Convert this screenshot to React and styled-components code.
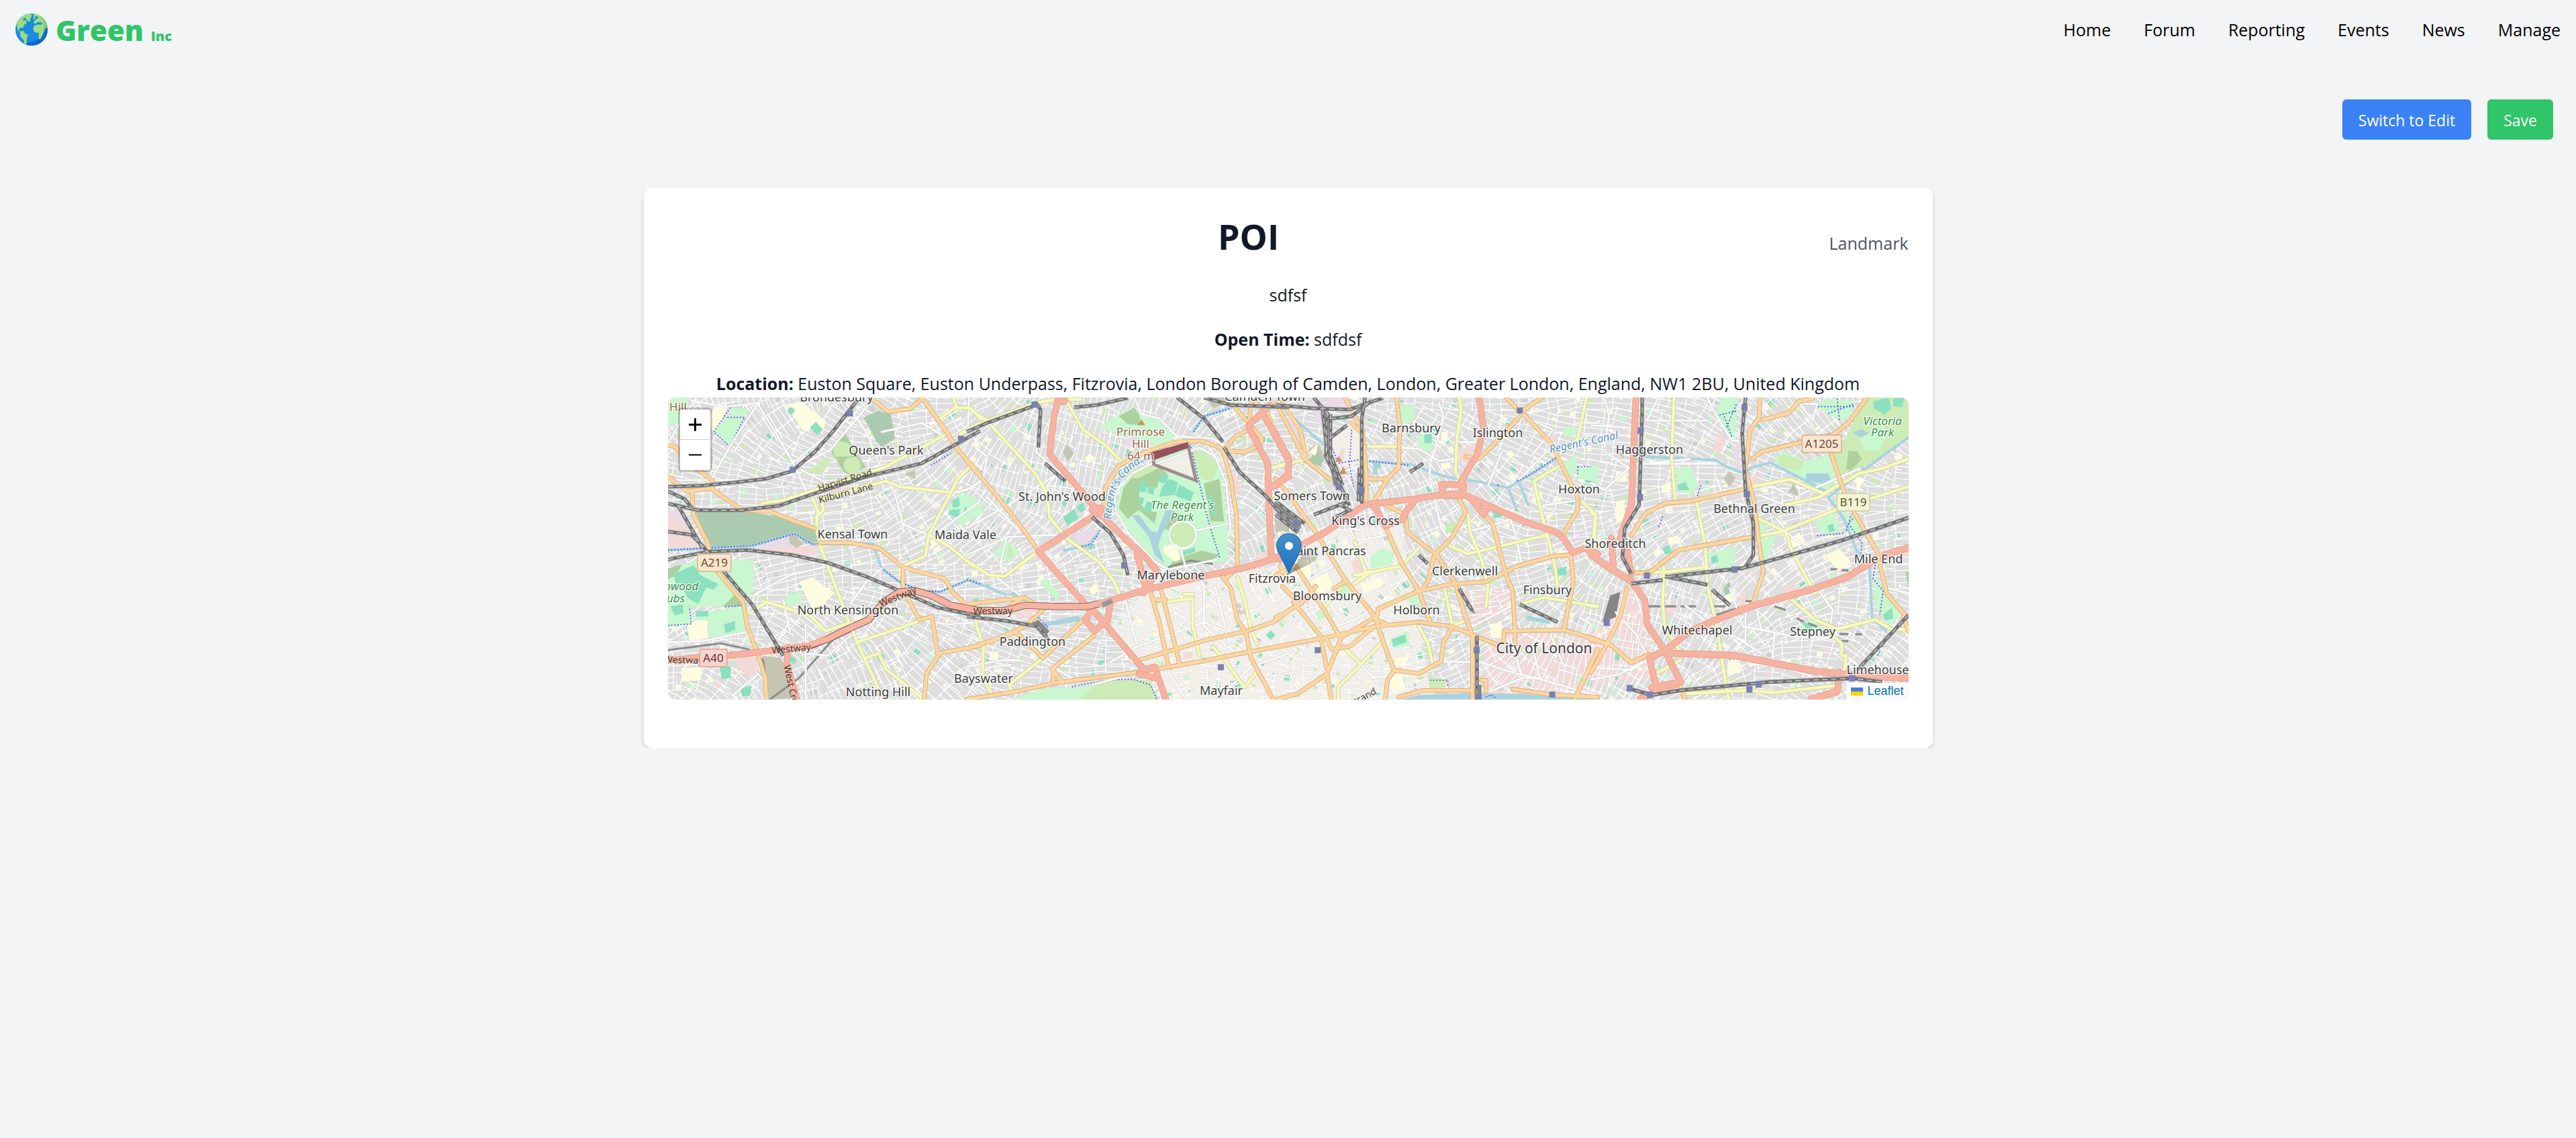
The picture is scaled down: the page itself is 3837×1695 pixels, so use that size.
import React from "react";
import styled, { createGlobalStyle } from "styled-components";

const GlobalStyle = createGlobalStyle`
  * {
    box-sizing: border-box;
  }

  body {
    margin: 0;
    background-color: #f3f4f6;
    color: #111827;
    font-family: "Segoe UI", "Open Sans", "Noto Sans", sans-serif;
    font-size: 25px;
    line-height: 42px;
  }
`;

const COLORS = {
  park: "#c8f7d0",
  grass: "#cdebb5",
  wood: "#add19e",
  pitch: "#8ce0c0",
  cemetery: "#aacbaf",
  water: "#aad3df",
  pink: "#f4d9d9",
  lilac: "#ebdbe8",
  school: "#fffde0",
  brown: "#c5c5b4",
  cream: "#f2eee8",
  yard: "#858585",
};

// every tile keeps its own drawing units: scale maps them to the map canvas
const TILES = [
  {
    transform: "translate(-15 -12) scale(0.3333)",
    base: [],
    areas: [
      ["park", "M45 36H140L120 140L45 165Z M250 190L310 115L385 130L320 255Z M320 85L400 85L390 125L330 120Z"],
      ["school", "M235 110L265 60L310 80L270 170L240 190Z M570 70L640 55L750 140L735 200L690 170L650 185Z M130 1040L220 1030L225 1110L140 1125Z M105 1245L195 1240L190 1300L105 1305Z M630 860L690 840L790 910L700 1000Z"],
      ["cemetery", "M165 545L380 545L520 565L700 625L715 680L660 690L610 645L540 670L420 700L240 708L190 600Z M920 125L985 95L1040 110L1060 220L1000 258L975 230Z"],
      ["wood", "M775 280L835 195L930 350L850 380L830 370Z"],
      ["grass", "M780 260Q800 220 850 240L880 270L860 300L790 300Z M830 340a38 38 0 1 0 76 0a38 38 0 1 0-76 0 M650 380L760 300L770 320L740 370Z"],
      ["park", "M45 810L180 760L430 765L425 900L385 940L280 970L150 970L150 1050L45 1055Z M165 1000L390 970L390 1090L230 1110L225 1030L165 1030Z M1290 530L1370 465L1440 500V560L1350 610Z M570 920L640 905L640 960L570 965Z"],
      ["wood", "M45 800L110 780L80 830L45 850Z M290 970L340 920L385 940L370 970Z"],
      ["pitch", "M70 825L160 785L190 830L270 870L250 895L215 885L180 960L130 930L110 880L80 870Z M55 970L110 960L115 1000L75 1010Z M170 990h55v25h-55Z M295 1050L345 1035L345 1075L300 1090Z M680 170L705 145L738 180L712 205Z M580 95a15 15 0 1 0 30 0a15 15 0 1 0-30 0 M1310 500L1345 480L1350 520L1320 530Z M1300 540L1350 535L1345 575L1300 560Z M1368 540a20 20 0 1 0 40 0a20 20 0 1 0-40 0 M275 1240L325 1235L325 1290L285 1295Z M370 1335L420 1325L410 1370L375 1372Z"],
      ["pink", "M45 540L90 550L200 700L45 712Z M620 700L720 700L700 745L560 735L440 712Z M340 1210L430 1190L450 1250L400 1290Z"],
      ["lilac", "M45 540L110 545L140 620L45 560Z M420 700L540 665L590 650L600 690L480 720Z"],
      ["brown", "M585 655L610 645L650 690L620 708L590 690Z M465 1190L550 1200L620 1380L500 1386Z M1100 380L1150 360L1150 400Z"],
    ],
    white: [
      "M45 240L130 100L170 40 M150 50L300 78L450 60 M460 38L450 70L530 200L605 330L670 470 M840 60L930 190L1010 380L1060 470L1095 600V640",
      "M600 330L720 235L890 100 M625 345L770 270L940 70 M80 405H460L640 370 M240 400L330 240L450 60 M1090 600L1210 650",
      "M435 915L590 830L760 790 M860 960L930 860L1000 800 M660 1180L760 1190L860 1100L900 1090 M45 1130L200 1125L390 1085",
      "M330 1370L450 1270 M1390 40L1385 180 M1010 470L1060 540 M640 360L760 420 M660 1050V1380 M1220 660L1440 500 M1310 460Q1380 460 1440 410 M1000 190L1180 150L1280 210",
      "M435 915L400 1000 M560 940L590 1080 M1170 1030L1300 1050L1440 1040 M940 850L860 960",
    ],
    yellow: [
      "M460 530L465 510L560 495L700 450L940 370L1010 350L1280 205",
      "M680 460L715 545L708 610L725 700L790 870L850 1030L890 1130L990 1345L1000 1386",
      "M708 570L740 540L730 490L940 430L1020 410L1080 435L1310 460L1340 400L1400 340",
      "M1310 460L1210 650L1195 745L1095 790 M1210 650L1300 700L1410 790 M410 1000L485 950L680 1010L750 1080L850 1045",
      "M890 1130L1100 1060L1180 1030 M930 1200L985 1180L1020 1250L1180 1380 M1260 130L1330 80L1400 85L1440 130 M1320 36L1335 80 M1350 200L1440 150",
    ],
    orange: [
      "M45 250L75 255L170 350L245 410V450L380 540L500 545L600 585L700 620 M45 390L130 455L240 440",
      "M152 460L158 560L220 680L230 730L270 820L380 950L400 1060L445 1180L480 1290L485 1386",
      "M725 685L860 685L990 710L1095 795L1280 845L1320 910L1380 965L1440 985",
      "M1095 795V890L1130 960L1170 1030L1225 1015L1250 1180L1440 1145 M1260 1180L1200 1270L1190 1386",
      "M960 45L1030 100L1130 85L1175 45 M1180 36L1290 190L1340 270L1400 335L1440 385",
    ],
    red: [
      "M45 1210L310 1190L530 1165L680 1145L760 1115L850 1070L940 1030L1010 950L1080 905L1150 900L1220 920L1310 965L1440 990",
      "M585 1150L575 1225L600 1310L620 1386",
    ],
    rail: [
      "M45 435L200 430L350 415L480 400L600 365L700 280L780 190L890 50",
      "M45 510L180 540L370 540L540 520L700 465L930 390L1180 330L1440 185",
      "M45 760L220 725L400 718L600 740L760 775L940 840L1080 900L1250 975L1440 1015",
      "M45 635L150 650L200 700L300 820L420 960L560 1190 M45 455L120 490L160 540 M90 520L200 710",
    ],
    track: ["M45 1165L280 1135L400 1160L470 1210L490 1380 M870 1075L780 1120L630 1290L500 1386"],
    water: ["M45 718L240 710L420 700L540 665L610 640L690 692L960 690L1000 800L1080 860L1170 900L1260 905L1390 850L1440 870"],
    dots: ["M45 718L420 698L610 645L690 692L760 685 M1000 800L1080 860L1160 895L1260 905L1390 850L1440 870 M250 190L325 80 M385 130L320 255L250 190 M310 125H385 M45 1055L150 1048L140 970 M300 972L380 965 M1220 340L1300 290"],
    stations: [[845, 94], [589, 346], [1341, 207]],
  },
  {
    transform: "translate(445 -12) scale(0.3333)",
    base: [["cream", "M820 880L1440 780V1386H880L800 1240L640 1060Z"]],
    areas: [
      ["park", "M590 165L740 75L790 125L860 130L930 200L920 230L860 250L650 190Z"],
      ["wood", "M680 120L750 80L775 125L770 160L720 155Z"],
      ["park", "M690 420L830 320L1000 260L1060 270L1130 330L1165 600L1165 770L980 790L900 800L820 740L700 600L670 540Z"],
      ["wood", "M700 440L760 370L860 345L900 380L860 400L850 440L770 430L770 500L800 540L850 550L840 600L770 540L740 560L720 580L680 530Z M880 560L920 540L990 580L920 640L880 620Z M1060 420L1130 400L1150 590L1090 590Z M1050 720L1130 740L1070 780L900 795L930 760Z"],
      ["grass", "M700 380L740 360L820 330L860 350L760 400Z M1000 270L1060 275L1125 330L1100 410L1050 400Z M905 650a60 60 0 1 0 120 0a60 60 0 1 0-120 0"],
      ["cream", "M850 330L990 275L1010 390L900 350Z"],
      ["pitch", "M775 410L808 415L800 460L765 455Z M860 380L900 385L895 420L860 415Z M905 400L945 415L930 470L860 480L870 440Z M950 425L1015 460L1000 500L930 475Z M808 435L840 440L835 470L808 465Z M770 480L795 485L785 515L768 505Z M805 500L840 510L820 552L790 540Z M1080 475L1105 485L1110 530L1085 530Z M1095 540L1120 540L1115 562L1098 562Z M430 570L480 535L500 575L450 610Z M488 525L520 505L530 540L505 550Z M960 725L1020 705L1020 725L965 745Z"],
      ["school", "M880 700L940 690L955 760L930 770L880 730Z M310 860L335 820L350 850L320 880Z M545 890L580 860L590 900L560 920Z M100 1180L140 1170L140 1210L105 1205Z M525 310L550 285L575 310L545 325Z"],
      ["water", "M735 560L770 560L820 630L850 640L890 540L930 540L870 650L855 700L885 780L840 740L815 660Z M180 920L215 900L235 925Z M330 1045L500 1010L510 1035L350 1060Z"],
      ["park", "M115 740L170 670L240 730L190 770Z M0 470L40 480L80 550L0 570Z M325 860L350 840L420 920L400 940Z M200 1386L330 1340L500 1330L820 1310L850 1386Z"],
      ["grass", "M500 1386L600 1300L820 1300L850 1386Z M190 680L210 740L180 760Z"],
      ["lilac", "M480 660L560 615L590 650L540 690L500 690Z M705 225L755 210L770 240L720 265Z"],
      ["pink", "M205 1005L280 985L300 1010L250 1025Z M1290 745L1340 720L1360 750L1290 770Z M965 1180L1005 1170L1010 1200L970 1205Z M1180 390L1200 370L1230 460L1200 470Z"],
      ["brown", "M430 280L450 245L480 285L450 320Z M1070 36L1150 36L1160 60L1100 85Z M1375 580L1440 600V640L1380 625Z"],
      ["yard", "M290 1045L320 1030L370 1080L345 1110Z M1365 500L1440 560V620L1370 530Z"],
    ],
    white: [
      "M0 450L75 400L90 300L40 260 M0 620L180 520L370 400L420 370 M0 740L180 660L400 650 M90 480L240 640 M180 660L150 780L160 830",
      "M750 40L780 110L860 130L940 210L1100 220L1150 250 M330 110L310 280L410 370L360 430V500 M560 820L620 760L750 740",
      "M830 330L740 375L660 460L665 540L720 640L840 770L900 805L1120 760 M830 340L1040 260L1110 300L1160 420L1180 640 M905 650a60 60 0 1 0 120 0a60 60 0 1 0-120 0 M955 710L980 800 M1025 630L1165 600",
      "M0 1240L160 1210L240 1210 M330 1180L350 1220L470 1290 M170 1000L310 1150L380 1220 M700 910L760 1140 M0 1300L110 1240L200 1230",
      "M640 1220L760 1150L1060 1040L1150 1080 M1060 880V1060L1190 1170 M900 1260L980 1386 M1110 880L1180 1160 M1120 1386L1270 1240L1440 1180 M120 830L250 930L170 1000 M710 1280L560 1320",
    ],
    yellow: [
      "M0 80L90 140L310 380L360 470L370 570L440 660L590 770L660 860L680 910 M0 190L90 140L310 60",
      "M450 60L520 180L620 250L700 330 M0 765L100 830L170 835L310 730 M40 1010L45 1060L75 1150L70 1280L110 1360",
      "M890 950L1010 935V1060L1040 1190 M970 915H1010 M1210 840L1240 940L1270 1070L1300 1140 M1100 1150L1160 1220L1240 1330 M200 1350L190 1320L340 1200 M310 60L400 45L510 45",
      "M1365 350L1430 330 M1240 1330L1300 1260",
    ],
    orange: [
      "M0 320L130 470L240 610L320 720 M610 530L620 440L680 340L800 280L930 235L1050 230L1130 260L1150 290",
      "M1150 290L1180 400L1205 560L1210 800L1150 850 M1140 830L1180 890L1210 1030L1250 1090L1270 1200L1370 1386",
      "M1150 270L1200 210L1260 180L1270 60 M1190 70L1320 220L1310 250L1240 280L1160 275 M0 1160L220 1085L340 1200 M100 1130L260 1060L340 985L260 930L200 960",
      "M340 1200L520 1030 M570 1100L380 1250L430 1310 M390 1250L385 1310 M770 1210L1070 1120L1250 1080L1370 1040L1440 990",
      "M0 1385L220 1350L400 1310L760 1265L1050 1215L1250 1175L1440 1140 M820 900L860 1040L900 1230 M870 900L910 1060L950 1220 M830 940H890 M1400 790L1440 860 M1290 60L1340 100L1440 320 M0 960L260 930",
    ],
    red: [
      "M410 36L390 120L370 290L490 430L600 560L720 680L790 740L850 810L790 910 M440 50L410 60 M600 545L320 725L530 960",
      "M560 540L600 530 M0 988H170L260 965L400 970L540 970L620 950L800 895L1060 835L1250 795L1430 740 M760 730L800 890 M640 960L630 1030L570 1080L530 1030L560 980L790 1250L840 1240L890 1386 M770 1270L840 1290",
      "M1355 70L1260 160L1270 190L1345 330L1350 500L1360 740L1400 760 M1320 100L1440 320 M1440 390L1350 440",
    ],
    rail: [
      "M0 190L90 150L310 70 M310 60L330 90L320 260 M480 80L580 70L720 38 M940 36L1060 130L1145 235 M1150 260L1220 370L1340 480L1440 600 M350 330L440 410",
      "M560 570L640 640L700 740L720 830 M0 1015L180 1035L320 1060L360 1110 M1060 36L1180 70L1440 80",
    ],
    track: ["M900 795L1000 765L1100 780"],
    water: ["M1010 190L1060 120L1180 80L1250 70 M640 570L650 440L720 350L830 300 M0 850L60 870L180 920 M590 640L540 700L430 720"],
    dots: ["M1015 190L1060 120L1180 85 M830 290L1000 250L1080 590L1130 750 M500 705L560 690L595 630 M0 850L60 870 M310 1010L370 1070 M470 1330L620 1300L740 1295L820 1320L850 1386"],
    stations: [[289, 54], [690, 773], [1122, 1228]],
  },
  {
    transform: "translate(905 -12) scale(0.3333)",
    base: [
      ["cream", "M0 820L120 640L560 600L700 1386H0Z"],
      ["pink", "M930 1070L1440 1110V1386H940Z M850 900L1060 880L1040 1000L880 1050Z"],
    ],
    areas: [
      ["lilac", "M40 140L100 150L120 240L80 220Z M160 36L210 36L220 200L160 90Z M230 36H330V80L240 90Z"],
      ["brown", "M145 270L190 240L220 300L200 350Z M0 580L60 620L0 640Z"],
      ["cream", "M240 220L340 150L390 210L380 330L300 350L260 300Z"],
      ["park", "M550 80L620 70L620 140L550 160Z M635 200L700 200L700 280L640 260Z M1280 330L1340 290L1350 350L1310 390Z M1340 350L1440 340V410L1350 400Z M280 890L320 870L335 900L300 930Z M510 1120L590 1080L600 1140L530 1160Z M420 750L470 710L530 730L520 780L430 800Z M590 935L640 920L650 960L610 970Z M180 1000L200 985L220 1020L190 1030Z M1290 170L1340 165V210H1290Z"],
      ["pitch", "M665 200H698V240H665Z M970 545L1005 540L1010 570L975 575Z M1240 810L1300 790V830L1240 830Z M520 1115L580 1095L585 1130L525 1150Z"],
      ["grass", "M680 1280L770 1300L750 1340L690 1340Z M760 600L810 590L800 640L760 640Z M640 1150L720 1170L700 1200Z"],
      ["school", "M85 770L150 760L160 840L110 850Z M160 850L230 820L260 880L200 920Z M380 870L470 840L490 870L400 910Z M960 1050L1010 1040L1020 1110L960 1110Z M740 190h30v40h-30Z M1030 290L1050 270L1070 290L1050 310Z M150 280L190 240L180 300Z M535 1200L600 1190L570 1240L530 1230Z M510 1290L560 1260L580 1340L520 1350Z M740 330h40v25h-40Z M1160 460h30v30h-30Z"],
      ["pink", "M820 270L890 240L870 320L820 330Z M340 770L370 750L390 810L350 815Z M640 760L700 740L690 780Z M290 270L310 260L300 330L280 320Z M840 900L860 890L870 960Z M1210 210L1250 200L1240 235Z"],
      ["cemetery", "M150 310L190 285L215 310L200 340L170 335Z"],
      ["water", "M560 1386L640 1365L860 1358L1100 1360L1440 1386Z M435 320L455 320V380H435Z M1120 1010L1220 1030L1230 1050L1120 1030Z"],
      ["yard", "M370 350H395V500H365Z M240 330L300 440L260 430Z M0 510L120 590L100 640L20 560Z M890 1320H920V1386H890Z"],
    ],
    white: [
      "M730 60L750 120L710 280L690 330V400L740 620L800 700 M560 260L640 265L730 320L800 310 M790 236H910 M300 370L390 335",
      "M0 210L120 330 M270 470L330 560 M130 860L240 800L400 670L500 650 M0 950L100 880 M210 1080L350 1030L440 980",
      "M840 640L960 610L1050 580L1070 640L1100 780 M1190 520L1350 495 M880 1060L1050 970 M1140 300L1240 180L1150 140 M1340 150H1440",
      "M750 1215L920 1220L1040 1260L1200 1300L1440 1370 M1050 1110L1100 1280 M1230 1100L1290 1240 M1150 1150L1180 1290 M960 1350L1100 1290L1190 1290 M280 1170L130 1340 M60 1260L120 1386 M350 1200L440 1290L500 1280",
      "M380 630L330 620L420 800 M1010 280L950 430 M1090 400L1230 260 M0 1160L220 1110 M0 1040L120 970 M1360 1020L1410 1050L1390 1090L1290 1080",
    ],
    yellow: [
      "M820 36L830 90L810 220L805 370L830 420 M415 255H550 M0 350L60 330L130 315 M1390 36L1350 220L1270 290 M1270 340L1155 410L1190 560L1215 650L1250 800L1260 880",
      "M355 680L410 830L350 830L560 790L640 710 M780 700L860 735L1215 650 M860 560L870 640L920 760L950 880L940 970 M320 850L220 970 M280 1386V1330L380 1230L470 1135 M310 1160L380 1225",
      "M1090 960L1200 930L1440 970 M755 890L790 1055L860 1030 M640 1060L680 1130L700 1220 M1370 500L1430 560L1420 660 M350 870L420 820",
    ],
    orange: [
      "M0 60L60 170L130 310L240 400 M30 60L110 180L135 300 M540 36L555 160L550 350L500 400L440 500 M310 36L390 190L405 380L405 510",
      "M415 400H500 M0 400L60 470L180 640L310 850L440 1010L500 1180L530 1255L640 1270L740 1215L750 1130L790 1060",
      "M820 490L850 550L790 660L710 740L680 860L650 900 M490 610L560 770L640 900L690 1040 M480 510L580 560L590 640L720 740L800 860L850 1020L880 1100L880 1386",
      "M310 860L260 890 M0 1020L110 960L180 880 M90 790L220 990L290 1110 M0 1150L220 1110L440 1060L640 1040L790 1060L990 1140 M450 1020L460 980L640 900L790 870L940 860L1080 790L1240 745L1310 740",
      "M850 300L910 310L1000 220L1100 110L1030 36 M1190 36L1100 100L1230 240L1350 480L1350 540L1290 640 M930 560L970 600L1030 830L1060 900L1070 1080L1070 1140 M1020 1130V1080L1290 1075L1440 1120",
      "M1320 740L1330 860L1290 1070 M1440 1160L1340 1380 M490 1386L500 1300L530 1255 M0 1386L100 1360L230 1270L290 1120 M230 1270L250 1386 M230 1120L250 1160L330 1150L440 1060 M550 1375L660 1345L870 1345 M1060 1340L1240 1365L1440 1375 M920 1300H940V1350 M80 950L200 1100L230 1250 M290 1110L440 1020 M450 1030L500 1050",
      "M340 150L390 200 M0 830L80 790 M30 880L110 960",
    ],
    red: [
      "M910 36L930 180L900 290L830 410V440 M740 425H840V475H750L740 425 M0 755L220 640L400 515L620 490L750 470L830 465L920 505L1110 590L1260 640L1290 670L1330 730L1380 710L1440 735",
      "M440 520L490 610L570 580L580 550L620 500 M870 480L930 560L950 520 M0 200L60 310L55 380L0 430",
    ],
    rail: [
      "M0 70L180 85L330 90L480 38 M170 36L250 130L340 120L430 50 M230 100L225 300L280 410L330 520 M245 110V290L300 430 M210 90L235 320 M400 36L385 130V510",
      "M375 350L370 500 M0 500L130 600 M0 530L110 620 M0 560L100 640 M280 510L330 540L270 570 M640 740L680 780 M820 890L880 990 M1090 960L1260 1040 M900 1100V1386",
      "M240 220L320 160 M600 370L660 330 M170 560L330 500",
    ],
    track: ["M850 960L890 1000"],
    water: ["M60 110L220 250 M415 320L600 335L760 390L920 415L1040 440L1270 300 M1040 440L1080 545 M1090 420L1130 520"],
    dots: ["M245 240L280 330L370 315L600 340 M340 180L330 340L350 440 M990 428H1000 M1080 410L1140 380L1260 300 M1350 345H1410 M1350 345V385 M940 1375L965 1365L985 1380 M690 1300H770V1330"],
    stations: [[1078, 81], [268, 423], [371, 437], [79, 586], [175, 1152], [885, 1151], [1223, 1350], [893, 1362]],
  },
  {
    transform: "translate(1375 -12) scale(0.3333 0.3571)",
    base: [["pink", "M0 1020L180 830L250 1000L300 1200L0 1240Z"]],
    areas: [
      ["park", "M585 34H660L640 200L610 190L560 100Z M1000 70L1060 38L1180 50L1160 110L1110 130Z M380 330L440 320L480 400L450 440L385 420Z M820 290L860 260L960 300L1060 270L1100 380L1030 430L830 320Z"],
      ["grass", "M1230 34H1419V190L1300 280L1120 370L1080 270L1150 180Z M830 290L860 270L950 300L930 340L850 320Z"],
      ["park", "M1200 210L1300 150L1330 180L1280 260L1220 250Z M1000 560L1080 510L1120 590L1040 610Z M530 690L640 650L640 740L560 740Z M770 630L830 600L790 710L760 700Z M1260 780L1310 830L1390 930L1330 990L1270 900Z M920 990L980 960L1060 1010L960 1020Z M1110 510L1190 540L1210 620L1150 590Z M760 520L790 600L770 650L750 600Z"],
      ["pitch", "M1260 50L1330 34L1340 80L1310 105L1265 80Z M1350 38L1400 34L1390 75L1350 70Z M385 400L420 385L440 420L390 420Z M320 660L350 650L360 680L330 690Z M1055 570L1080 560L1090 590L1065 595Z M1305 940L1345 910L1350 955L1315 965Z M535 700L560 690L570 720L540 725Z M940 970L1000 980L970 1010Z"],
      ["water", "M960 350L1060 350L1075 390L1040 395L960 380Z M1170 180L1210 165L1240 185L1200 200Z"],
      ["wood", "M1150 255L1190 260L1210 290L1160 340L1140 330Z"],
      ["cemetery", "M590 830L620 800L630 850L600 860Z M1405 760H1419V830Z"],
      ["brown", "M590 370L620 340L645 370L620 405Z M880 430L905 390L930 445Z M125 270L145 260L145 290Z"],
      ["school", "M110 345L160 340L160 385L110 385Z M110 470L150 460L150 540L110 560Z M315 400L355 385V430L320 435Z M340 620L390 610L400 640L350 650Z M880 630L930 600L960 640L900 660Z M1050 690L1110 665L1160 720L1100 760Z M600 860L640 840L650 880L610 890Z M610 1140L660 1120L670 1180L610 1190Z M1180 360L1220 380L1190 430Z M850 1150L890 1120L900 1170Z"],
      ["pink", "M580 170L600 220L570 270L540 250Z M710 365L745 360L745 400L715 400Z M330 900L380 900L370 940L330 930Z M170 900L220 895L200 935L170 930Z M860 820L910 810L910 850L870 855Z M665 850L690 840L690 900L660 900Z"],
      ["lilac", "M640 250L665 200L665 340H645Z"],
      ["yard", "M85 860L130 845L110 950L50 970Z"],
    ],
    white: [
      "M520 34L560 110L630 215L660 215 M930 60L990 130L1010 60L950 60 M0 150L190 160 M60 260L190 340 M0 390L60 420L190 310H560 M800 400L900 450 M260 130H520",
      "M60 40L80 110L60 240 M250 130L300 34 M830 540L900 620L960 650 M560 370L600 470L680 480 M750 440L860 480 M250 310L440 290",
      "M620 830L680 990L750 1000L900 1030L1100 1040 M690 920V1060 M740 920L760 1000 M420 900L560 1000L690 1050 M1010 830L1080 920L1070 980 M810 1130L820 1020",
      "M0 1160L180 1170L280 1110 M0 1210L120 1190L250 1130 M110 930L200 1020L250 1110 M190 830L250 1000 M1330 830L1419 850 M640 1030L760 1100 M1200 1000L1340 1120 M930 440L1200 330",
    ],
    yellow: [
      "M370 34L360 280L375 460 M720 405L890 375L1040 435L1200 350L1300 330L1419 290 M870 480L1020 450L1100 400 M750 540L860 590L1100 500L1419 405 M755 610L870 590L890 660L1000 850",
      "M470 460L510 650L520 820L560 980L600 1220L615 1293 M190 765L350 760L520 740 M325 740L320 900L330 990L400 1100 M900 880L1000 960L1100 1000L1270 960L1340 1000H1419",
      "M1060 1010L1120 1060V1110L1140 1110L1130 1180 M410 1270L700 1255L810 1265L1100 1235 M0 510L20 530L15 660 M300 1180L400 1130 M0 905L30 905",
    ],
    orange: [
      "M755 34L750 120L710 170L690 340L730 470L750 640L770 760L720 900 M770 125L880 100L930 50L990 38 M720 290L760 260L940 220L1080 190L1150 140L1230 38",
      "M1070 260L1120 400L1160 490L1280 680L1320 850L1410 950 M180 610L240 520L330 475L450 465L690 415 M190 765H260L390 670L510 650L720 615",
      "M160 830L130 950L60 1080L0 1180 M0 1045L80 1060L180 1140L260 1105 M400 1240L420 1293 M1395 950L1419 1010",
    ],
    red: [
      "M200 34L180 480L130 620L160 670L180 770 M90 620L100 750 M0 690L90 750L180 800L240 880L250 980L330 1090L400 1220L270 1245",
      "M330 1090L440 1010L560 960L730 900L1000 830L1150 780L1270 710 M1310 690L1419 660 M350 1100L640 1110L860 1150L1000 1175L1200 1195L1419 1205 M330 1090L260 1120L290 1240 M1110 1180L1100 1260L980 1293 M220 1290L380 1230",
    ],
    rail: [
      "M228 34V90L225 180L215 480L150 580L140 700L180 770 M690 34L675 180L690 420L725 560V690L690 740 M180 810L320 795 M330 780L520 815 M350 780L680 745L930 680L1120 630L1419 535",
      "M540 835L620 900 M160 1245L270 1275L400 1255L800 1220L1170 1205L1300 1220 M1419 940L1190 1170",
    ],
    track: ["M560 940L660 910 M1110 1020H1150 M1180 1022H1210 M1120 1050H1150 M1070 750H1100 M1120 755H1150 M250 905H310 M330 905H380 M400 905H470 M530 905H600 M690 883H730 M820 905L870 920 M920 955L950 970 M970 975L1010 990"],
    water: ["M230 280L560 295L600 320L680 350L720 325L800 305L1060 430 M1419 200L1270 300L1060 450L1130 540L1190 680L1245 740L1255 950L1320 1010"],
    dots: ["M1000 72H1180 M1100 38L1110 130 M1060 100L1180 60 M560 110L650 90 M590 100L630 200 M600 170L650 60 M1190 520L1150 560L1210 640L1205 690 M1270 730L1260 790L1305 840L1290 940 M1160 530L1140 590 M1010 610L1130 600 M1280 1110L1310 1060 M320 530L300 580 M490 400L470 460"],
    stations: [[672, 62], [208, 159], [205, 436], [682, 423], [236, 763], [627, 738], [56, 960], [159, 1233], [249, 1260], [694, 1238], [735, 1217], [1153, 1191]],
  },
];

const PLACES = [
  ["Brondesbury", 251, 6],
  ["Queen's Park", 325, 85],
  ["Kensal Town", 275, 210],
  ["North Kensington", 268, 323],
  ["Notting Hill", 313, 445],
  ["Maida Vale", 443, 211],
  ["Bayswater", 470, 425],
  ["St. John's Wood", 587, 154],
  ["Marylebone", 749, 271],
  ["Fitzrovia", 900, 276],
  ["Paddington", 543, 370],
  ["Mayfair", 824, 443],
  ["Camden Town", 889, 5],
  ["Somers Town", 959, 153],
  ["Barnsbury", 1107, 52],
  ["Islington", 1236, 59],
  ["Hoxton", 1357, 143],
  ["King's Cross", 1039, 190],
  ["Saint Pancras", 983, 235],
  ["Clerkenwell", 1187, 265],
  ["Finsbury", 1310, 293],
  ["Bloomsbury", 982, 302],
  ["Holborn", 1115, 323],
  ["City of London", 1305, 381, "city"],
  ["Shoreditch", 1411, 224],
  ["Haggerston", 1462, 84],
  ["Bethnal Green", 1618, 172],
  ["Mile End", 1803, 247],
  ["Whitechapel", 1533, 353],
  ["Stepney", 1705, 355],
  ["Limehouse", 1802, 412],
  ["Primrose", 704, 57, "peak"],
  ["Hill", 704, 75, "peak"],
  ["64 m", 704, 93, "peak"],
  ["Hill", 15, 20, "peak"],
  ["The Regent's", 766, 166, "park"],
  ["Park", 766, 184, "park"],
  ["Victoria", 1809, 41, "park"],
  ["Park", 1809, 58, "park"],
  ["Wormwood", 2, 287, "park"],
  ["Scrubs", 0, 305, "park"],
  ["Harvist Road", 265, 128, "street", -17],
  ["Kilburn Lane", 266, 147, "street", -15],
  ["Westway", 23, 396, "street", 2],
  ["Westway", 184, 379, "street", -5],
  ["Westway", 344, 301, "street", -22],
  ["Westway", 484, 323, "street"],
  ["West Cross", 180, 435, "street", 78],
  ["Strand", 1037, 451, "street", -28],
  ["Regent's Canal", 1365, 72, "canal", -12],
];

const LABELS = {
  town: { size: 18, fill: "#3c3c3c" },
  city: { size: 21, fill: "#3c3c3c" },
  peak: { size: 17, fill: "#9c6644" },
  park: { size: 17, fill: "#3f8f52", italic: true },
  street: { size: 14, fill: "#4a3f33" },
  canal: { size: 16, fill: "#5b97c4", italic: true },
};

const SHIELDS = [
  ["A219", 44, 233, 50, "#f8e5d0", "#d9b48c", "#6b4a20"],
  ["A40", 47, 375, 41, "#f6d5d0", "#e0a090", "#6b2f2a"],
  ["A1205", 1689, 56, 59, "#f8e5d0", "#d9a98c", "#6b4a30"],
  ["B119", 1741, 143, 49, "#f4f4d6", "#cccf9c", "#55552c"],
];

const ROADS = [
  ["white", "#c8c8c8", 11, "#ffffff", 8],
  ["yellow", "#cfcf96", 18, "#f7fabf", 13],
  ["orange", "#d6aa6c", 20, "#fcd6a4", 15],
  ["red", "#e4947f", 29, "#f7b3a2", 25],
];

// side streets and small plots, the same on every render
const buildStreets = () => {
  let seed = 11;
  const rand = () => {
    seed = (seed * 16807) % 2147483647;
    return seed / 2147483647;
  };
  const fills = ["#cdebb5", "#c8f7d0", "#fffde0", "#fffde0", "#f4d9d9", "#cdebb5", "#8ce0c0", "#d0d0d0"];
  let lanes = "";
  const plots = [];
  for (let x = 0; x < 1860; x += 42) {
    for (let y = 0; y < 460; y += 38) {
      const angle = Math.sin(x / 130) * 0.6 + Math.cos(y / 90 + x / 260) * 0.8 + (rand() - 0.5) * 0.3;
      const cos = Math.cos(angle);
      const sin = Math.sin(angle);
      const line = (u1, v1, u2, v2) => {
        const p = (u, v) => `${Math.round(x + u * cos - v * sin)} ${Math.round(y + u * sin + v * cos)}`;
        lanes += `M${p(u1, v1)}L${p(u2, v2)}`;
      };
      for (let i = -2; i <= 2; i += 1) {
        line(-20 - rand() * 8, i * 9, 12 + rand() * 14, i * 9 + rand() * 4 - 2);
      }
      line(-20, -20, -20, 20);
      line(4 + rand() * 8, -20, 6, 20);
      for (let i = 0; i < 3; i += 1) {
        plots.push({
          x: Math.round(x + rand() * 40 - 20),
          y: Math.round(y + rand() * 36 - 18),
          w: 3 + Math.round(rand() * 8),
          h: 3 + Math.round(rand() * 7),
          a: Math.round((angle * 180) / Math.PI),
          fill: fills[Math.floor(rand() * fills.length)],
        });
      }
    }
  }
  return { lanes, plots };
};

const STREETS = buildStreets();

const GlobeIcon = () => (
  <svg width="48" height="48" viewBox="0 0 144 144" aria-hidden="true">
    <clipPath id="globe">
      <circle cx="72" cy="72" r="72" />
    </clipPath>
    <g clipPath="url(#globe)">
      <rect width="144" height="144" fill="#1a8cdd" />
      <path d="M50 130C95 130 125 105 134 66L144 66V144H40Z" fill="#1068cd" />
      <path d="M0 0H70L73 12L66 22L67 33L58 37L50 29L44 19L35 24L33 31L46 31L51 39L45 48L36 51L38 61L28 64L17 66L16 73L22 80L10 76L6 50L0 40Z" fill="#9bdc83" />
      <path d="M20 81L36 77L42 89L56 94L51 109L49 138L40 137L37 120L22 103Z" fill="#9bdc83" />
      <path d="M76 0H144V66H133L128 80L116 107L109 117L103 111L105 88L84 83L79 68L84 55L96 50H118V40H96L91 46L81 44L86 30L101 21L98 12L89 14L86 27L79 23L82 9Z" fill="#9bdc83" />
      <path d="M103 0H144V66H133L128 80L114 110L109 115L122 90L127 62Q129 25 103 0Z" fill="#7bc882" />
    </g>
  </svg>
);

const MarkerPin = () => (
  <svg width="76" height="62" viewBox="0 0 76 62" aria-label="Marker">
    <defs>
      <linearGradient id="pin" x1="0" y1="0" x2="0" y2="1">
        <stop offset="0" stopColor="#4592cb" />
        <stop offset="1" stopColor="#1f6fc0" />
      </linearGradient>
      <linearGradient id="shade" x1="0" y1="1" x2="1" y2="0">
        <stop offset="0" stopColor="#000" stopOpacity="0.45" />
        <stop offset="1" stopColor="#000" stopOpacity="0" />
      </linearGradient>
    </defs>
    <path d="M19 61L39 32Q52 20 62 28Q66 38 50 46Z" fill="url(#shade)" />
    <path
      d="M19 1C8 1 1 9 1 19C1 24 3 28 5 32L19 60L33 32C35 28 37 24 37 19C37 9 30 1 19 1Z"
      fill="url(#pin)"
      stroke="#2e74ad"
      strokeWidth="1.5"
    />
    <circle cx="19" cy="19" r="6.5" fill="#fff" stroke="#2e7ab8" />
  </svg>
);

const StreetMap = () => (
  <MapCanvas viewBox="0 0 1848 450" preserveAspectRatio="xMidYMid slice" role="img" aria-label="Map of London">
    <rect width="1848" height="450" fill="#dedede" />
    {TILES.map((tile) => (
      <g key={tile.transform} transform={tile.transform}>
        {tile.base.map(([kind, d]) => (
          <path key={d} d={d} fill={COLORS[kind]} />
        ))}
      </g>
    ))}
    {STREETS.plots.map((p, i) => (
      <rect key={i} x={p.x} y={p.y} width={p.w} height={p.h} fill={p.fill} transform={`rotate(${p.a} ${p.x} ${p.y})`} />
    ))}
    <path d={STREETS.lanes} stroke="#cccccc" strokeWidth="2.2" fill="none" />
    <path d={STREETS.lanes} stroke="#fff" strokeWidth="1.6" fill="none" />
    {TILES.map((tile) => (
      <g key={tile.transform} transform={tile.transform}>
        {tile.areas.map(([kind, d]) => (
          <path key={d} d={d} fill={COLORS[kind]} />
        ))}
        <path d={tile.water.join("")} stroke={COLORS.water} strokeWidth="12" fill="none" />
        <path d={tile.dots.join("")} stroke="#4a55e8" strokeWidth="5" strokeDasharray="6 8" fill="none" />
        <path d={tile.track.join("")} stroke="#8c8c8c" strokeWidth="9" fill="none" />
      </g>
    ))}
    {ROADS.map(([kind, edge, edgeWidth, fill, width]) => (
      <g key={kind} fill="none" strokeLinejoin="round" strokeLinecap="round">
        {TILES.map((tile) => (
          <path key={tile.transform} transform={tile.transform} d={tile[kind].join("")} stroke={edge} strokeWidth={edgeWidth} />
        ))}
        {TILES.map((tile) => (
          <path key={tile.transform} transform={tile.transform} d={tile[kind].join("")} stroke={fill} strokeWidth={width} />
        ))}
      </g>
    ))}
    {TILES.map((tile) => (
      <g key={tile.transform} transform={tile.transform} fill="none">
        <path d={tile.rail.join("")} stroke="#a0a0a0" strokeWidth="18" />
        <path d={tile.rail.join("")} stroke="#707070" strokeWidth="13" />
        <path d={tile.rail.join("")} stroke="#d0d0d0" strokeWidth="4" strokeDasharray="24 16" />
        {tile.stations.map(([x, y]) => (
          <rect key={`${x}-${y}`} x={x} y={y} width="27" height="27" fill="#7981b0" />
        ))}
      </g>
    ))}
    <g transform="translate(445 -12) scale(0.3333)">
      <path d="M0 988H170L260 965L400 970L540 970L590 958" fill="none" stroke="#6e5048" strokeWidth="31" />
      <path d="M0 988H170L260 965L400 970L540 970L620 950" fill="none" stroke="#f7b3a2" strokeWidth="26" />
      <path d="M605 965L650 945" stroke="#999" strokeWidth="22" />
      <path d="M835 300L990 255L1025 408L835 335Z" fill="none" stroke="#98657a" strokeWidth="14" strokeOpacity="0.75" />
      <path d="M820 282L990 235V262L830 318Z" fill="#95535f" />
      <path d="M764 160L780 134L797 160Z" fill="#cf914f" />
    </g>
    <g transform="translate(-15 -12) scale(0.3333)" fill="none">
      <path d="M680 1145L760 1115L850 1070L940 1030L1010 950L1080 905L1150 900L1220 920L1310 965L1440 990" stroke="#6e5048" strokeWidth="32" />
      <path d="M660 1148L760 1115L850 1070L940 1030L1010 950L1080 905L1150 900L1220 920L1310 965L1440 990" stroke="#f7b3a2" strokeWidth="27" />
    </g>
    <path d="M994 96L999 87L1004 96Z M1000 114L1006 103L1011 114Z" fill="#c9965a" />
    <g fontFamily="Noto Sans, sans-serif" paintOrder="stroke" stroke="#fff" strokeOpacity="0.7" strokeWidth="3" strokeLinejoin="round">
      {PLACES.map(([name, x, y, kind = "town", turn = 0]) => {
        const label = LABELS[kind];
        return (
          <text
            key={`${name}-${x}-${y}`}
            x={x}
            y={y}
            textAnchor="middle"
            fontSize={label.size}
            fontStyle={label.italic ? "italic" : "normal"}
            fill={label.fill}
            strokeWidth={kind === "street" ? 0 : 3}
            transform={turn ? `rotate(${turn} ${x} ${y})` : undefined}
          >
            {name}
          </text>
        );
      })}
      <path id="canal" d="M660 182C662 145 668 120 704 98" fill="none" stroke="none" />
      <text fontSize="16" fontStyle="italic" fill="#5b97c4">
        <textPath href="#canal">Regent's Canal</textPath>
      </text>
    </g>
    {SHIELDS.map(([name, x, y, width, fill, edge, ink]) => (
      <g key={name}>
        <rect x={x} y={y} width={width} height="26" rx="3" fill={fill} stroke={edge} strokeWidth="1.5" />
        <text x={x + width / 2} y={y + 19} textAnchor="middle" fontFamily="Noto Sans, sans-serif" fontSize="17" fill={ink}>
          {name}
        </text>
      </g>
    ))}
  </MapCanvas>
);

const NAV_LINKS = ["Home", "Forum", "Reporting", "Events", "News", "Manage"];

export default function App() {
  return (
    <>
      <GlobalStyle />
      <Header>
        <Logo href="#">
          <GlobeIcon />
          <Brand>
            Green <small>Inc</small>
          </Brand>
        </Logo>
        <Nav>
          {NAV_LINKS.map((name) => (
            <NavLink key={name} href="#">
              {name}
            </NavLink>
          ))}
        </Nav>
      </Header>

      <Actions>
        <Button $color="#3b82f6">Switch to Edit</Button>
        <Button $color="#2fc568">Save</Button>
      </Actions>

      <Card>
        <CardHeader>
          <Title>POI</Title>
          <Category>Landmark</Category>
        </CardHeader>
        <Text>sdfsf</Text>
        <Text>
          <strong>Open Time:</strong> sdfdsf
        </Text>
        <Text>
          <strong>Location:</strong> Euston Square, Euston Underpass, Fitzrovia, London Borough of Camden, London,
          Greater London, England, NW1 2BU, United Kingdom
        </Text>
        <MapBox>
          <StreetMap />
          <ZoomControl>
            <ZoomButton aria-label="Zoom in">
              <svg width="19" height="19" viewBox="0 0 19 19">
                <path d="M0 9.5H19M9.5 0V19" stroke="#000" strokeWidth="3" />
              </svg>
            </ZoomButton>
            <ZoomButton aria-label="Zoom out">
              <svg width="19" height="19" viewBox="0 0 19 19">
                <path d="M0 9.5H19" stroke="#000" strokeWidth="2" />
              </svg>
            </ZoomButton>
          </ZoomControl>
          <Marker>
            <MarkerPin />
          </Marker>
          <Attribution href="#">
            <svg width="18" height="12" viewBox="0 0 18 12" aria-hidden="true">
              <path d="M0 0H18V6H0Z" fill="#4c7be1" />
              <path d="M0 6H18V12H0Z" fill="#ffd500" />
            </svg>
            Leaflet
          </Attribution>
        </MapBox>
      </Card>
    </>
  );
}

const Header = styled.header`
  display: flex;
  align-items: center;
  justify-content: space-between;
  height: 88px;
  padding: 0 23px;
`;

const Logo = styled.a`
  display: flex;
  align-items: center;
  gap: 12px;
  color: #2fc568;
  text-decoration: none;
`;

const Brand = styled.span`
  padding-top: 10px;
  font-size: 42px;
  font-weight: 800;
  line-height: 54px;

  small {
    font-size: 20px;
  }
`;

const Nav = styled.nav`
  display: flex;
  gap: 49px;
`;

const NavLink = styled.a`
  color: #000;
  text-decoration: none;
`;

const Actions = styled.div`
  display: flex;
  justify-content: flex-end;
  gap: 24px;
  padding: 60px 34px 72px;
`;

const Button = styled.button`
  height: 60px;
  padding: 2px 24px 0;
  border: none;
  border-radius: 6px;
  background-color: ${(props) => props.$color};
  color: #fff;
  font-family: inherit;
  font-size: 23px;
  cursor: pointer;
`;

const Card = styled.main`
  max-width: 1920px;
  margin: 0 auto;
  padding: 36px 36px 72px;
  border-radius: 12px;
  background-color: #fff;
  box-shadow: 0 6px 9px -1px rgba(0, 0, 0, 0.1), 0 3px 6px -1px rgba(0, 0, 0, 0.1);
  text-align: center;
`;

const CardHeader = styled.div`
  display: flex;
  align-items: baseline;
  height: 78px;
  margin-bottom: 24px;
`;

const Title = styled.h1`
  flex: 1;
  margin: 0;
  font-size: 52px;
  font-weight: 700;
  line-height: 72px;
`;

const Category = styled.span`
  color: #4b5563;
`;

const Text = styled.p`
  margin: 0 0 24px;

  &:last-of-type {
    margin-bottom: 0;
  }
`;

const MapBox = styled.div`
  position: relative;
  height: 450px;
  border-radius: 12px;
  overflow: hidden;
`;

const MapCanvas = styled.svg`
  display: block;
  width: 100%;
  height: 100%;
`;

const ZoomControl = styled.div`
  position: absolute;
  top: 15px;
  left: 15px;
  display: flex;
  flex-direction: column;
  border: 3px solid rgba(0, 0, 0, 0.2);
  border-radius: 6px;
  background-clip: padding-box;
`;

const ZoomButton = styled.button`
  display: flex;
  align-items: center;
  justify-content: center;
  width: 45px;
  height: 45px;
  padding: 0;
  border: none;
  background-color: #fff;
  cursor: pointer;

  &:first-child {
    border-bottom: 1px solid #ccc;
    border-radius: 3px 3px 0 0;
  }

  &:last-child {
    border-radius: 0 0 3px 3px;
  }
`;

const Marker = styled.div`
  position: absolute;
  top: 202px;
  left: calc(50% - 18px);
  line-height: 0;
`;

const Attribution = styled.a`
  position: absolute;
  right: 0;
  bottom: 0;
  display: flex;
  align-items: center;
  gap: 6px;
  padding: 0 7px;
  background-color: rgba(255, 255, 255, 0.8);
  color: #0078a8;
  font-family: "Liberation Sans", Arial, sans-serif;
  font-size: 18px;
  line-height: 25px;
  text-decoration: none;
`;
